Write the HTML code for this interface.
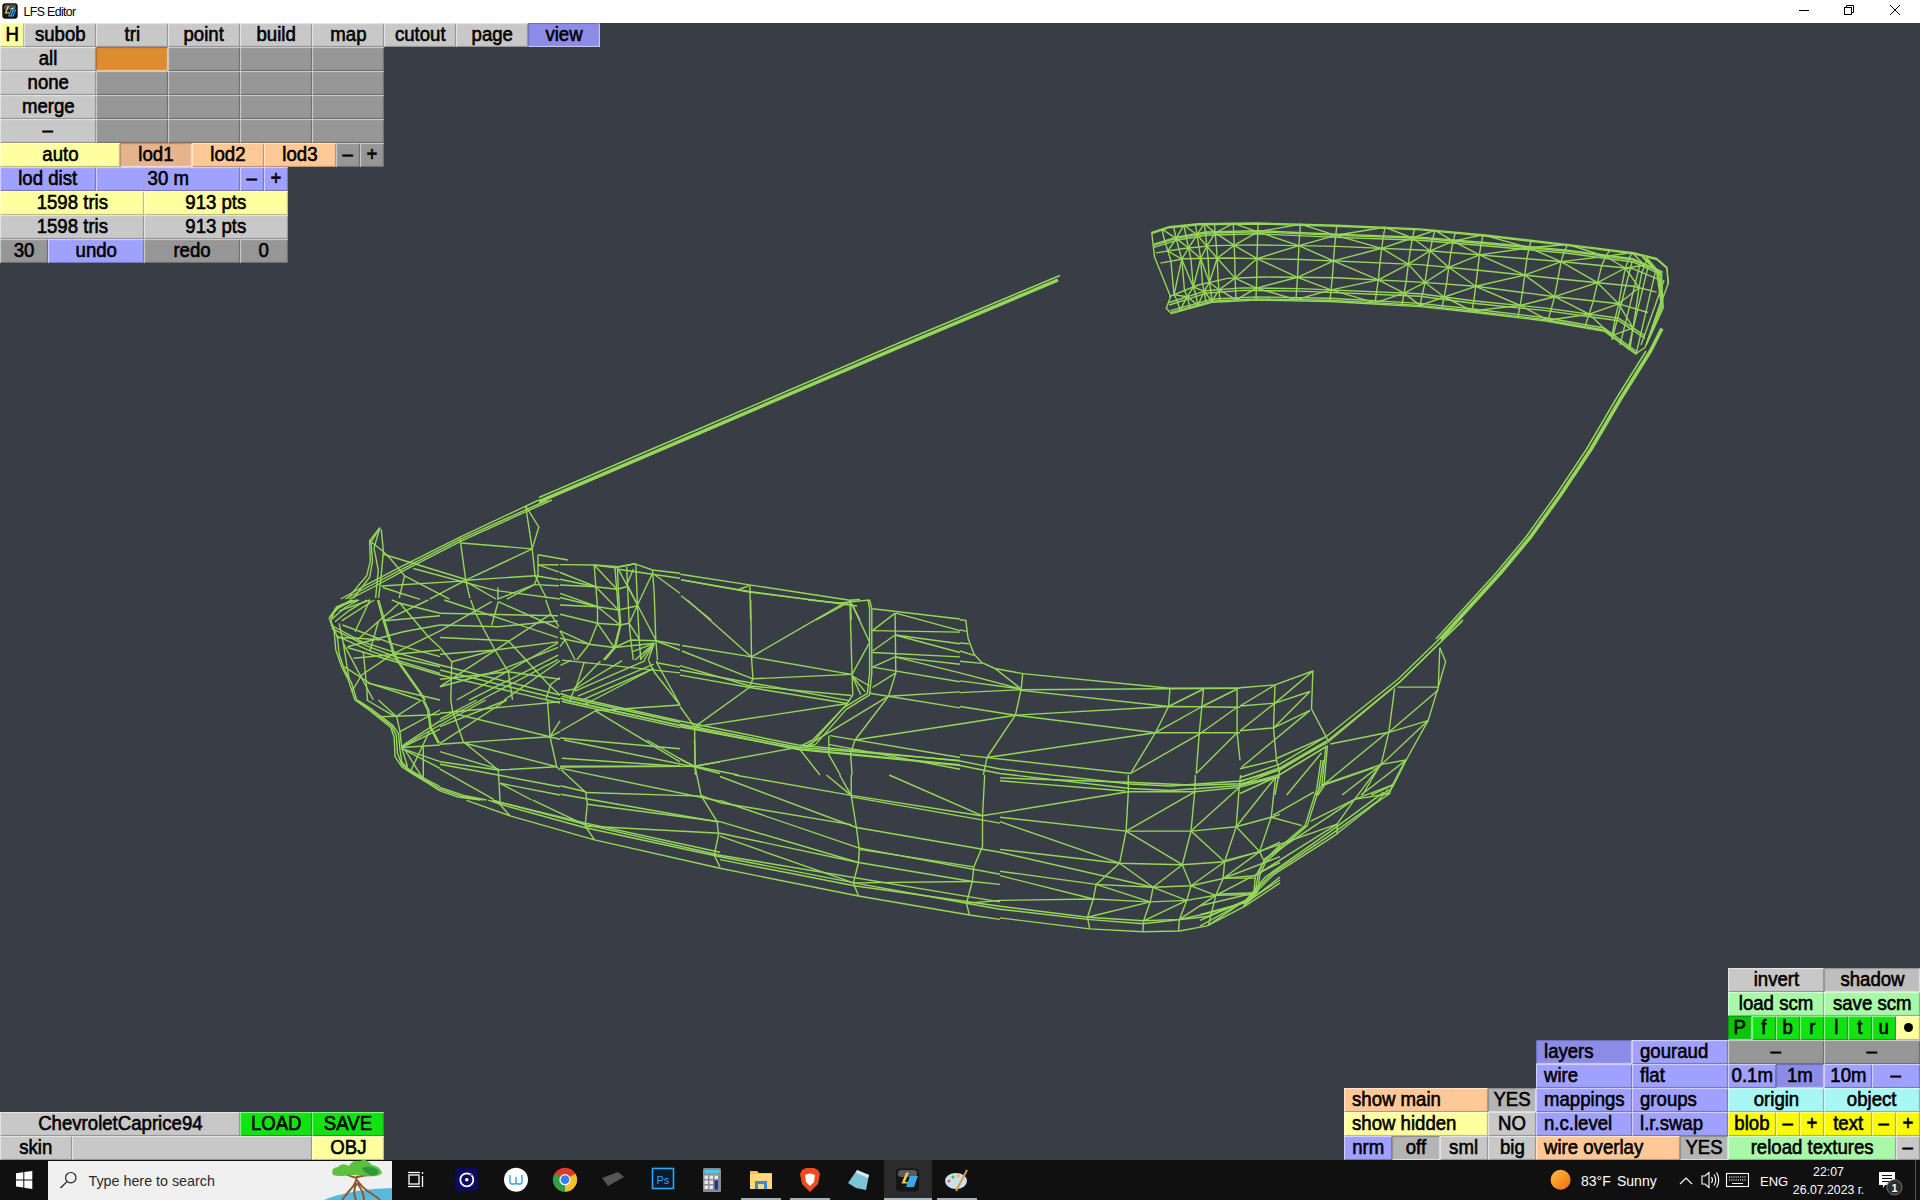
<!DOCTYPE html>
<html><head><meta charset="utf-8"><style>
html,body{margin:0;padding:0;}
body{width:1920px;height:1200px;position:relative;overflow:hidden;background:#393d45;font-family:"Liberation Sans",sans-serif;}
.b{position:absolute;box-sizing:border-box;box-shadow:inset 1px 1px 1px rgba(255,255,255,0.55), inset -1px -1px 1px rgba(0,0,0,0.28);font-size:20px;line-height:22px;text-align:center;color:#000;white-space:nowrap;overflow:hidden;}
.b.p{box-shadow:inset 1px 1px 1px rgba(0,0,0,0.22), inset -1px -1px 1px rgba(255,255,255,0.55);}
.b span{display:inline-block;transform:scaleX(0.93);-webkit-text-stroke:0.6px #000;}
.b.l span{transform-origin:0 50%;}
.dot span{display:inline-block;width:9px;height:9px;border-radius:50%;background:#000;vertical-align:middle;transform:none;-webkit-text-stroke:0;margin-top:-2px;}
#title{position:absolute;left:0;top:0;width:1920px;height:23px;background:#fff;}
#title .t{position:absolute;left:23.5px;top:5px;font-size:12.3px;line-height:14px;color:#000;letter-spacing:-0.6px;}
#tb{position:absolute;left:0;top:1160px;width:1920px;height:40px;background:#101010;}
#tb svg{position:absolute;left:0;top:0;}
svg{position:absolute;left:0;top:0;}
</style></head><body>
<div id="title">
<svg width="20" height="22" style="position:absolute;left:0;top:0" viewBox="0 0 20 22">
<rect x="2.3" y="3.3" width="15.4" height="15.4" rx="3" fill="#141414"/>
<rect x="4" y="4.5" width="12" height="5" rx="2" fill="#6a6a6a" opacity="0.7"/>
<path d="M7.5 6 L9.2 6 L6.6 12.2 L10 12.2 L9.5 13.4 L4.5 13.4 Z" fill="#e8c84a"/>
<path d="M10.5 9.5 L16.3 9.5 L13.6 16.5 L8 16.5 Z" fill="#3aa8e8"/>
<path d="M11.3 10.5 L12.5 10.5 L10.3 15.5 L9.1 15.5 Z M13.8 10.5 L15 10.5 L12.8 15.5 L11.6 15.5 Z" fill="#0a2a50"/>
<path d="M10 8.5 L14 7.5 L13 9 Z" fill="#ffffff"/>
</svg>
<div class="t">LFS Editor</div>
<svg width="120" height="22" style="position:absolute;left:1790px;top:0" viewBox="1790 0 120 22" fill="none" stroke="#000" stroke-width="1">
<line x1="1799" y1="10.5" x2="1809" y2="10.5"/>
<rect x="1844.5" y="7.5" width="7" height="7"/>
<path d="M1846.5 7.5 V5.5 H1853.5 V12.5 H1851.5"/>
<line x1="1890" y1="5" x2="1900" y2="15"/><line x1="1900" y1="5" x2="1890" y2="15"/>
</svg>
</div>
<svg width="1920" height="1200" viewBox="0 0 1920 1200"><g fill="none" stroke="#95d759" stroke-width="1.4" stroke-linejoin="round"><polyline points="960.0,619.7 965.8,620.4 968.0,637.9 973.9,654.0 981.9,662.7 995.0,668.5 1022.7,673.6 1170.0,688.2 1240.0,688.2"/><polyline points="960.0,629.9 966.6,631.4"/><polyline points="960.0,643.0 968.8,643.8"/><polyline points="960.0,651.0 973.9,655.4"/><polyline points="960.0,661.2 981.9,663.4"/><polyline points="995.0,668.5 1021.2,689.0"/><polyline points="960.0,672.9 1021.2,689.0"/><polyline points="960.0,680.9 1021.2,689.0"/><polyline points="1022.7,673.6 1021.2,689.0 1015.4,715.2 987.0,757.5 983.3,775.0"/><polyline points="960.0,692.6 1021.2,689.7 1240.0,688.2"/><polyline points="1021.2,690.4 1168.5,706.5"/><polyline points="960.0,706.5 1015.4,715.2 1155.4,732.7 1240.0,732.7"/><polyline points="960.0,724.0 1015.4,715.2 1168.5,706.5 1240.0,707.2"/><polyline points="987.0,757.5 1155.4,732.7"/><polyline points="960.0,754.6 1130.6,773.5"/><polyline points="1170.0,688.2 1168.5,706.5 1155.4,732.7 1130.6,773.5"/><polyline points="1168.5,706.5 1203.5,689.0"/><polyline points="1203.5,689.0 1199.2,734.2 1196.2,773.5"/><polyline points="1155.4,732.7 1202.1,706.5 1237.1,689.0"/><polyline points="1130.6,773.5 1199.2,734.2 1237.1,707.2"/><polyline points="1237.1,689.0 1237.1,732.7 1240.0,760.4"/><polyline points="1196.2,773.5 1237.1,732.7"/><polyline points="687.3,600.0 751.5,656.9"/><polyline points="750.7,600.0 751.5,656.9 752.9,678.8 749.3,687.5 694.6,726.9 695.3,775.0"/><polyline points="751.5,656.9 841.9,604.4"/><polyline points="682.0,645.5 751.5,656.9 851.4,674.4"/><polyline points="681.9,651.0 752.9,678.8"/><polyline points="752.9,678.8 851.4,674.4"/><polyline points="680.0,665.6 750.0,686.0 851.4,695.5"/><polyline points="680.0,670.0 849.2,700.6"/><polyline points="680.0,675.1 750.0,687.5 847.7,703.5"/><polyline points="680.0,706.5 694.6,726.9"/><polyline points="694.6,726.9 847.7,703.5"/><polyline points="680.0,724.0 798.1,747.3 960.0,760.4"/><polyline points="680.0,726.9 798.1,748.8 960.0,764.8"/><polyline points="694.6,766.2 798.1,747.3"/><polyline points="680.0,759.0 694.6,766.2 738.3,775.0"/><polyline points="798.1,747.3 820.0,775.0"/><polyline points="869.6,600.0 871.8,608.8 871.8,672.9 869.6,694.8 846.2,709.4 815.6,744.4 805.4,747.3"/><polyline points="868.1,600.0 869.6,608.8 869.6,672.9 867.4,693.3 843.3,707.9 811.2,744.4 802.5,747.3"/><polyline points="849.9,601.5 852.1,674.4 852.8,694.8 846.2,705.0 812.7,740.0 799.6,746.6"/><polyline points="852.1,675.8 869.6,686.0"/><polyline points="852.1,675.8 865.2,691.9"/><polyline points="852.1,675.8 860.8,694.8"/><polyline points="852.1,604.4 869.6,642.3 852.1,674.4"/><polyline points="808.3,600.0 840.4,602.9 869.6,600.0"/><polyline points="895.1,613.1 895.8,672.9 888.5,696.2 855.0,740.0 850.6,753.1 852.1,775.0"/><polyline points="872.5,608.8 960.0,619.0"/><polyline points="895.8,613.1 960.0,630.6"/><polyline points="872.5,630.6 895.1,613.1"/><polyline points="872.5,630.6 960.0,632.1"/><polyline points="895.1,635.0 960.0,643.8"/><polyline points="895.1,635.0 960.0,652.5"/><polyline points="872.5,651.0 895.1,635.0"/><polyline points="872.5,652.5 960.0,656.9"/><polyline points="895.1,656.9 960.0,664.2"/><polyline points="895.1,656.9 960.0,672.9"/><polyline points="872.5,667.1 895.1,656.9"/><polyline points="872.5,667.1 960.0,681.7"/><polyline points="872.5,687.5 895.8,672.9"/><polyline points="888.5,696.2 960.0,691.9"/><polyline points="869.6,693.3 960.0,707.9"/><polyline points="855.0,740.0 960.0,724.0"/><polyline points="830.2,735.6 960.0,757.5"/><polyline points="828.8,735.6 828.8,754.6 840.4,775.0"/><polyline points="805.4,746.6 888.5,696.2"/><polyline points="828.8,744.4 960.0,769.2"/><polyline points="561.7,696.1 567.7,697.7 680.0,722.5"/><polyline points="561.7,699.0 567.7,700.6 680.0,725.4"/><polyline points="561.7,701.2 567.7,702.8 680.0,727.6"/><polyline points="560.4,665.3 571.3,660.1"/><polyline points="575.0,689.0 622.1,660.7"/><polyline points="575.0,691.1 645.3,660.7"/><polyline points="577.9,696.2 653.8,664.2"/><polyline points="580.8,700.6 653.8,668.5"/><polyline points="583.8,705.0 647.9,671.5"/><polyline points="600.3,661.2 575.0,687.5 569.2,702.1"/><polyline points="656.7,660.5 656.7,662.7 680.0,705.0"/><polyline points="648.5,660.4 653.8,671.5"/><polyline points="656.7,662.7 680.0,667.1"/><polyline points="561.9,660.1 680.0,672.9"/><polyline points="561.2,691.4 575.0,689.0"/><polyline points="560.2,738.0 680.0,748.8"/><polyline points="560.6,731.0 595.4,710.8 680.0,705.0"/><polyline points="562.0,758.3 680.0,766.2"/><polyline points="560.4,766.2 680.0,766.2"/><polyline points="584.4,661.7 575.0,690.4"/><polyline points="595.4,710.8 680.0,761.9"/><polyline points="653.8,671.5 680.0,705.0"/><polyline points="538.8,500.0 458.5,537.9 401.7,566.4 366.7,584.6 340.8,599.0"/><polyline points="547.5,500.0 460.0,539.4 406.0,567.1 369.6,586.0 345.2,599.0"/><polyline points="551.9,500.0 461.5,540.8 409.0,567.8 372.5,587.5 349.6,599.1"/><polyline points="379.8,527.7 369.6,540.8 370.3,561.2 366.7,575.8 347.6,598.4"/><polyline points="379.8,527.7 371.0,542.3 372.5,561.2 369.6,577.3 353.3,598.4"/><polyline points="381.2,529.2 383.4,551.0 381.2,575.8 378.6,598.0"/><polyline points="379.8,527.7 374.0,548.1 378.3,570.0 375.6,598.0"/><polyline points="369.6,540.8 382.7,551.0 390.0,558.3"/><polyline points="460.0,538.6 465.8,580.2 469.8,598.1"/><polyline points="525.6,505.8 538.8,527.0 532.2,548.9 535.1,575.8 546.5,598.2"/><polyline points="525.6,505.8 532.2,548.9"/><polyline points="461.5,543.0 532.2,548.9"/><polyline points="532.2,548.9 465.8,580.2"/><polyline points="465.8,580.2 535.1,575.8"/><polyline points="538.0,554.7 538.0,575.8 534.4,584.6 496.9,599.3"/><polyline points="538.0,554.7 568.0,560.0"/><polyline points="538.0,564.9 558.7,564.7"/><polyline points="538.0,564.9 559.3,572.2"/><polyline points="535.1,575.8 559.4,579.7"/><polyline points="534.4,584.6 559.0,585.7"/><polyline points="382.7,554.0 465.8,579.5"/><polyline points="381.2,586.0 465.8,580.9"/><polyline points="413.3,568.5 495.0,590.4 559.8,599.0"/><polyline points="390.0,558.3 404.6,575.8 399.2,598.0"/><polyline points="429.7,599.1 465.8,580.2"/><polyline points="465.8,581.7 496.1,599.0"/><polyline points="507.0,599.1 534.4,584.6"/><polyline points="497.9,587.5 497.9,598.0"/><polyline points="404.6,575.8 449.5,599.1"/><polyline points="382.7,587.5 420.1,599.4"/><polyline points="466.5,800.4 510.0,815.8 594.6,839.9 720.0,868.3"/><polyline points="488.2,800.2 499.8,804.2 584.4,827.5 720.0,856.7"/><polyline points="492.5,800.3 585.8,824.6 720.0,855.2"/><polyline points="492.5,800.0 498.3,802.0 585.8,823.1 720.0,852.3"/><polyline points="499.9,800.1 499.8,804.2 510.0,815.8"/><polyline points="561.2,769.8 585.8,792.5 587.3,804.2 585.1,826.0 594.6,839.9"/><polyline points="694.5,740.0 695.2,767.0 701.0,795.4 717.1,821.7 718.5,834.8 714.2,855.2 720.0,866.9"/><polyline points="560.1,767.0 694.5,766.2 720.0,761.9"/><polyline points="494.5,801.0 499.8,804.2"/><polyline points="564.0,740.0 694.5,767.0"/><polyline points="647.1,740.0 694.5,767.0"/><polyline points="560.1,768.1 720.0,801.2"/><polyline points="560.4,785.7 585.8,791.8"/><polyline points="585.8,792.5 701.0,796.1"/><polyline points="560.7,794.2 717.1,821.7"/><polyline points="532.7,800.1 584.4,824.6"/><polyline points="587.3,804.2 720.0,821.7"/><polyline points="695.2,767.0 720.0,773.5"/><polyline points="701.0,795.4 720.0,802.7"/><polyline points="585.1,826.0 720.0,833.3"/><polyline points="720.0,868.3 858.5,896.0 969.4,915.0 1000.0,919.4"/><polyline points="720.0,856.7 854.2,882.9 966.5,903.3 1000.0,909.2"/><polyline points="720.0,859.6 854.2,885.8 1000.0,906.2"/><polyline points="720.0,855.2 1000.0,901.9"/><polyline points="851.2,775.0 851.2,795.4 856.4,827.5 859.3,849.4 858.5,862.5 853.4,882.9 858.5,896.0"/><polyline points="984.7,775.0 982.5,815.8 982.5,846.5 973.8,866.9 972.3,881.5 966.5,903.3 969.4,915.0"/><polyline points="826.5,775.0 851.2,795.4"/><polyline points="839.6,775.0 851.2,795.4"/><polyline points="734.6,775.0 851.2,795.4"/><polyline points="720.0,776.5 856.4,827.5 1000.0,852.3"/><polyline points="720.0,800.5 858.5,847.9 1000.0,874.2"/><polyline points="720.0,802.7 851.2,824.6"/><polyline points="720.0,821.7 858.5,862.5 972.3,881.5"/><polyline points="720.0,833.3 858.5,862.5"/><polyline points="720.0,836.2 853.4,882.9"/><polyline points="851.2,795.4 981.0,815.8"/><polyline points="851.2,796.9 1000.0,823.1"/><polyline points="889.2,775.0 982.5,815.8"/><polyline points="982.5,815.8 1000.0,812.9"/><polyline points="853.4,882.9 972.3,881.5"/><polyline points="972.3,881.5 1000.0,884.4"/><polyline points="966.5,903.3 1000.0,900.4"/><polyline points="859.3,849.4 973.8,866.9"/><polyline points="1128.3,775.0 1128.3,791.8 1126.1,831.1 1119.6,863.2 1096.2,884.4 1093.3,899.0 1087.5,917.2 1089.7,928.9"/><polyline points="1195.4,775.0 1194.7,791.8 1191.0,831.1 1182.3,864.7 1191.0,885.8 1186.7,900.4 1179.4,919.4 1178.6,931.0"/><polyline points="1119.6,863.2 1153.1,887.3 1150.2,901.9 1143.6,920.8 1142.9,931.8"/><polyline points="1240.6,775.0 1239.2,787.4 1236.2,826.8 1224.6,861.8 1223.1,878.5 1215.8,895.3 1208.5,925.2"/><polyline points="1275.6,777.2 1271.2,817.3 1259.6,851.6 1264.0,861.0 1255.2,877.1 1253.8,894.6 1243.5,906.2"/><polyline points="1280.0,845.0 1264.0,861.0"/><polyline points="1000.0,812.9 1128.3,791.8"/><polyline points="1000.0,817.3 1126.1,831.1 1191.0,831.1 1236.2,826.8 1271.2,817.3 1280.0,814.4"/><polyline points="1000.0,821.7 1119.6,863.2"/><polyline points="1000.0,849.4 1119.6,863.2 1182.3,864.7 1224.6,861.8 1259.6,851.6 1280.0,842.1"/><polyline points="1000.0,852.3 1153.1,887.3"/><polyline points="1000.0,871.2 1096.2,884.4 1153.1,887.3 1191.0,885.8 1223.1,878.5 1253.8,875.6 1280.0,862.5"/><polyline points="1000.0,875.6 1093.3,899.0"/><polyline points="1000.0,900.4 1093.3,899.0 1150.2,901.9 1186.7,900.4 1215.8,895.3 1253.8,894.6"/><polyline points="1000.0,906.2 1087.5,917.2 1143.6,920.8 1179.4,919.4 1207.1,913.5 1247.9,901.9 1280.0,877.1"/><polyline points="1000.0,909.2 1087.5,919.4 1142.9,923.8 1207.1,916.5 1250.8,899.0 1280.0,880.0"/><polyline points="1000.0,917.9 1089.7,928.9 1142.9,931.8 1179.4,931.0 1207.1,925.9 1245.0,906.2 1280.0,882.9"/><polyline points="1000.0,777.9 1128.3,782.3 1195.4,785.2 1240.6,783.8 1280.0,777.2"/><polyline points="1000.0,780.8 1125.4,791.0"/><polyline points="1128.3,791.8 1194.7,791.8 1239.2,787.4 1275.6,777.2"/><polyline points="1126.1,831.1 1194.7,791.8"/><polyline points="1191.0,831.1 1239.2,787.4"/><polyline points="1236.2,826.8 1275.6,777.2"/><polyline points="1126.1,831.1 1182.3,864.7"/><polyline points="1191.0,831.1 1224.6,861.8"/><polyline points="1236.2,826.8 1259.6,851.6"/><polyline points="1182.3,864.7 1153.1,887.3"/><polyline points="1224.6,861.8 1191.0,885.8"/><polyline points="1259.6,851.6 1223.1,878.5"/><polyline points="1096.2,884.4 1150.2,901.9"/><polyline points="1153.1,887.3 1186.7,900.4"/><polyline points="1191.0,885.8 1215.8,895.3"/><polyline points="1087.5,917.2 1150.2,901.9"/><polyline points="1143.6,920.8 1186.7,900.4"/><polyline points="1179.4,919.4 1215.8,895.3"/><polyline points="1208.5,925.2 1253.8,894.6"/><polyline points="1215.8,895.3 1253.8,875.6"/><polyline points="1223.1,878.5 1280.0,856.7"/><polyline points="1458.8,620.0 1397.5,679.8 1326.0,736.7 1279.4,764.4 1240.0,777.5"/><polyline points="1463.1,620.0 1400.4,681.2 1329.0,739.6 1280.8,767.3 1240.0,781.9"/><polyline points="1461.7,621.5 1399.0,682.7 1327.5,742.5 1277.9,770.2 1240.0,784.8"/><polyline points="1240.0,687.8 1275.0,684.9 1312.9,671.0 1311.5,709.0 1324.6,733.8 1327.5,739.6"/><polyline points="1275.0,684.9 1273.5,727.9 1276.5,760.0 1279.4,771.7 1275.0,795.0"/><polyline points="1240.0,706.0 1275.0,703.1 1310.0,691.5"/><polyline points="1240.0,730.8 1273.5,727.9 1310.0,710.4"/><polyline points="1240.0,706.0 1275.0,684.9"/><polyline points="1275.0,703.1 1312.9,671.0"/><polyline points="1240.0,730.8 1275.0,703.1"/><polyline points="1273.5,727.9 1310.0,691.5"/><polyline points="1241.5,767.3 1310.0,710.4"/><polyline points="1276.5,758.5 1326.0,736.7"/><polyline points="1240.0,768.8 1276.5,760.0"/><polyline points="1439.8,647.7 1445.6,661.6 1438.3,687.1 1428.1,720.6 1406.2,760.0 1393.1,786.2 1385.8,795.0"/><polyline points="1439.8,647.7 1438.3,687.1"/><polyline points="1397.5,687.1 1438.3,687.1"/><polyline points="1394.6,688.5 1388.8,732.3 1381.5,762.9 1362.5,795.0"/><polyline points="1388.8,732.3 1438.3,690.0"/><polyline points="1330.4,744.0 1388.8,732.3 1428.1,720.6"/><polyline points="1326.0,745.4 1321.7,786.2 1315.8,795.0"/><polyline points="1327.5,745.4 1323.9,786.2 1318.0,795.0"/><polyline points="1321.7,786.2 1387.3,732.3"/><polyline points="1381.5,764.4 1428.1,720.6"/><polyline points="1321.7,784.8 1381.5,764.4 1406.2,760.0"/><polyline points="1361.0,795.0 1406.2,760.0"/><polyline points="1371.2,795.0 1393.1,784.8"/><polyline points="1275.0,777.5 1326.0,746.9"/><polyline points="1240.0,793.5 1275.0,777.5"/><polyline points="1286.7,795.0 1321.7,752.7"/><polyline points="1342.1,795.0 1381.5,764.4"/><polyline points="1392.5,784.8 1389.6,793.5 1375.0,803.8 1334.2,835.8 1272.9,875.2 1249.6,898.5 1200.0,926.2"/><polyline points="1388.1,789.2 1377.9,800.8 1331.2,834.4 1270.0,875.2 1246.7,900.0 1200.0,920.4"/><polyline points="1383.8,792.1 1328.3,832.9 1265.6,876.7 1243.8,902.9 1200.0,914.6"/><polyline points="1321.0,760.0 1316.7,789.2 1305.0,825.6 1264.2,860.6 1258.3,873.8 1255.4,891.2 1243.8,904.4"/><polyline points="1323.2,760.0 1318.9,789.2 1307.2,825.6 1265.6,862.1 1259.8,875.2 1257.6,892.0 1246.7,903.6"/><polyline points="1392.5,784.8 1354.6,799.4 1310.8,821.2"/><polyline points="1405.6,760.0 1392.5,784.8"/><polyline points="1380.8,764.4 1354.6,799.4 1337.1,824.2 1337.1,834.4"/><polyline points="1321.0,786.2 1375.0,767.3"/><polyline points="1270.0,816.9 1302.1,825.6"/><polyline points="1272.9,815.4 1313.8,792.1"/><polyline points="1264.2,859.2 1354.6,799.4"/><polyline points="1258.3,851.9 1337.1,824.2"/><polyline points="1224.8,860.6 1258.3,851.9"/><polyline points="1258.3,873.8 1337.1,824.2"/><polyline points="1223.3,878.1 1255.4,878.1"/><polyline points="1216.0,894.2 1255.4,892.7"/><polyline points="1200.0,905.8 1255.4,892.7"/><polyline points="1389.6,793.5 1354.6,799.4"/><polyline points="680.3,574.3 849.8,600.2 860.0,599.5"/><polyline points="681.6,579.9 749.2,591.5 857.1,606.0"/><polyline points="681.0,579.7 750.6,592.2 849.8,604.6"/><polyline points="737.5,590.0 749.2,585.6"/><polyline points="749.9,585.6 750.6,620.0"/><polyline points="850.5,600.2 851.2,620.0"/><polyline points="681.2,595.8 711.2,620.0"/><polyline points="816.2,620.0 849.8,601.7"/><polyline points="851.2,603.1 860.0,620.0"/><polyline points="1151.7,232.5 1169.2,226.7 1198.3,223.7 1256.7,223.0 1336.9,225.2 1420.0,228.9 1487.5,235.2 1575.0,245.4 1633.3,252.7 1656.7,258.5 1666.9,267.3 1668.3,283.3"/><polyline points="1153.1,245.6 1176.5,238.3 1205.6,233.2 1256.7,231.8 1336.9,235.4 1420.0,238.3 1487.5,244.0 1567.7,251.3 1633.3,260.0 1662.5,273.1"/><polyline points="1156.0,252.9 1183.8,248.5 1212.9,245.6 1256.7,244.9 1336.9,246.4 1420.0,250.0 1560.4,261.5 1633.3,268.8 1661.0,280.4"/><polyline points="1160.4,263.1 1183.8,258.8 1227.5,258.0 1300.4,259.5 1420.0,264.6 1478.8,270.2 1560.4,279.0 1633.3,286.3 1656.7,292.1"/><polyline points="1169.2,296.7 1198.3,285.0 1227.5,278.4 1264.0,277.0 1336.9,277.7 1420.0,282.1 1475.8,286.3 1553.1,296.5 1618.8,303.8 1647.9,312.5"/><polyline points="1169.2,302.5 1205.6,290.8 1242.1,287.9 1300.4,288.6 1420.0,293.8 1472.9,300.8 1545.8,308.1 1618.8,318.3 1645.0,335.8"/><polyline points="1170.6,312.7 1212.9,301.0 1256.7,298.9 1329.6,300.3 1420.0,305.4 1472.9,311.0 1545.8,319.8 1604.2,330.0 1636.3,353.3"/><polyline points="1153.1,247.6 1176.5,240.3 1205.6,235.2 1256.7,233.8 1336.9,237.4 1420.0,240.3 1487.5,246.0 1567.7,253.3 1633.3,262.0 1662.5,275.1"/><polyline points="1169.2,305.0 1205.6,293.3 1242.1,290.4 1300.4,291.1 1420.0,296.3 1472.9,303.3 1545.8,310.6 1618.8,320.8 1645.0,338.3"/><polyline points="1170.6,310.7 1212.9,299.0 1256.7,296.9 1329.6,298.3 1420.0,303.4 1472.9,309.0 1545.8,317.8 1604.2,328.0 1636.3,351.3"/><polyline points="1668.3,283.3 1659.6,306.7 1645.0,347.5 1636.3,353.3"/><polyline points="1664.0,280.0 1655.0,306.0 1641.0,345.0"/><polyline points="1151.7,232.5 1154.6,257.3 1170.6,296.7 1166.3,308.3 1170.6,312.7"/><polyline points="1161.9,229.1 1164.9,241.9 1167.9,251.0 1171.0,261.2 1174.0,294.8 1177.0,300.0 1180.0,310.1"/><polyline points="1173.5,226.3 1176.2,238.4 1179.0,249.3 1181.8,259.2 1184.5,290.5 1187.2,296.7 1190.0,307.3"/><polyline points="1183.8,225.2 1188.5,248.0 1190.9,258.7 1193.3,287.0 1195.6,294.0 1198.0,305.1"/><polyline points="1195.4,224.0 1200.7,258.5 1202.5,284.1 1204.2,291.2 1206.0,302.9"/><polyline points="1204.2,223.6 1205.5,233.2 1208.1,258.4 1209.4,282.5 1210.7,290.4 1212.0,301.2"/><polyline points="1214.4,223.5 1216.3,245.5 1217.2,258.2 1218.1,280.5 1220.0,300.7"/><polyline points="1233.3,223.3 1234.7,258.1 1235.1,278.1 1236.0,299.9"/><polyline points="1258.1,223.0 1257.0,258.6 1256.7,277.3 1256.0,298.9"/><polyline points="1300.4,224.2 1298.9,245.7 1297.5,277.3 1296.0,299.7"/><polyline points="1336.9,225.2 1334.6,246.4 1332.3,277.7 1330.0,300.3"/><polyline points="1385.0,227.3 1383.3,237.0 1381.7,248.3 1380.0,262.9 1378.3,279.9 1375.0,302.9"/><polyline points="1414.6,228.7 1412.5,238.0 1410.4,249.6 1408.3,264.1 1406.2,281.4 1402.0,304.4"/><polyline points="1435.0,230.3 1432.5,239.4 1430.0,250.8 1427.5,265.3 1425.0,282.5 1420.0,305.4"/><polyline points="1455.4,232.2 1453.2,241.1 1450.9,252.6 1448.7,267.3 1446.5,284.1 1444.2,297.0 1442.0,307.7"/><polyline points="1483.1,234.8 1481.2,243.5 1479.4,254.9 1475.7,286.3 1473.8,300.9 1472.0,310.9"/><polyline points="1531.3,240.3 1529.1,247.8 1526.9,258.8 1522.4,292.5 1520.2,305.5 1518.0,316.4"/><polyline points="1567.7,244.5 1564.4,251.0 1561.1,261.6 1554.6,296.7 1551.3,308.9 1548.0,320.2"/><polyline points="1610.0,249.8 1605.8,256.4 1601.7,265.6 1597.5,282.7 1593.3,301.0 1585.0,326.6"/><polyline points="1631.9,252.5 1628.6,259.4 1625.3,268.0 1622.0,285.2 1618.6,303.8 1615.3,317.8 1612.0,335.7"/><polyline points="1647.9,256.3 1644.9,265.2 1641.9,272.4 1639.0,287.7 1636.0,308.9 1633.0,327.8 1630.0,348.7"/><polyline points="1161.9,229.1 1176.2,238.4"/><polyline points="1167.9,251.0 1176.2,238.4"/><polyline points="1167.9,251.0 1181.8,259.2"/><polyline points="1174.0,294.8 1181.8,259.2"/><polyline points="1174.0,294.8 1187.2,296.7"/><polyline points="1180.0,310.1 1187.2,296.7"/><polyline points="1176.2,238.4 1183.8,225.2"/><polyline points="1176.2,238.4 1188.5,248.0"/><polyline points="1181.8,259.2 1188.5,248.0"/><polyline points="1181.8,259.2 1193.3,287.0"/><polyline points="1187.2,296.7 1193.3,287.0"/><polyline points="1187.2,296.7 1198.0,305.1"/><polyline points="1183.8,225.2 1197.2,234.7"/><polyline points="1188.5,248.0 1197.2,234.7"/><polyline points="1188.5,248.0 1200.7,258.5"/><polyline points="1193.3,287.0 1200.7,258.5"/><polyline points="1193.3,287.0 1204.2,291.2"/><polyline points="1198.0,305.1 1204.2,291.2"/><polyline points="1197.2,234.7 1204.2,223.6"/><polyline points="1197.2,234.7 1206.8,246.2"/><polyline points="1200.7,258.5 1206.8,246.2"/><polyline points="1200.7,258.5 1209.4,282.5"/><polyline points="1204.2,291.2 1209.4,282.5"/><polyline points="1204.2,291.2 1212.0,301.2"/><polyline points="1204.2,223.6 1215.3,232.9"/><polyline points="1206.8,246.2 1215.3,232.9"/><polyline points="1206.8,246.2 1217.2,258.2"/><polyline points="1209.4,282.5 1217.2,258.2"/><polyline points="1209.4,282.5 1219.1,289.7"/><polyline points="1212.0,301.2 1219.1,289.7"/><polyline points="1215.3,232.9 1233.3,223.3"/><polyline points="1215.3,232.9 1234.2,245.3"/><polyline points="1217.2,258.2 1234.2,245.3"/><polyline points="1217.2,258.2 1235.1,278.1"/><polyline points="1219.1,289.7 1235.1,278.1"/><polyline points="1219.1,289.7 1236.0,299.9"/><polyline points="1233.3,223.3 1257.8,231.8"/><polyline points="1234.2,245.3 1257.8,231.8"/><polyline points="1234.2,245.3 1257.0,258.6"/><polyline points="1235.1,278.1 1257.0,258.6"/><polyline points="1235.1,278.1 1256.3,288.1"/><polyline points="1236.0,299.9 1256.3,288.1"/><polyline points="1257.8,231.8 1300.4,224.2"/><polyline points="1257.8,231.8 1298.9,245.7"/><polyline points="1257.0,258.6 1298.9,245.7"/><polyline points="1257.0,258.6 1297.5,277.3"/><polyline points="1256.3,288.1 1297.5,277.3"/><polyline points="1256.3,288.1 1296.0,299.7"/><polyline points="1300.4,224.2 1335.8,235.3"/><polyline points="1298.9,245.7 1335.8,235.3"/><polyline points="1298.9,245.7 1333.5,260.9"/><polyline points="1297.5,277.3 1333.5,260.9"/><polyline points="1297.5,277.3 1331.2,289.9"/><polyline points="1296.0,299.7 1331.2,289.9"/><polyline points="1335.8,235.3 1385.0,227.3"/><polyline points="1335.8,235.3 1381.7,248.3"/><polyline points="1333.5,260.9 1381.7,248.3"/><polyline points="1333.5,260.9 1378.3,279.9"/><polyline points="1331.2,289.9 1378.3,279.9"/><polyline points="1331.2,289.9 1375.0,302.9"/><polyline points="1385.0,227.3 1412.5,238.0"/><polyline points="1381.7,248.3 1412.5,238.0"/><polyline points="1381.7,248.3 1408.3,264.1"/><polyline points="1378.3,279.9 1408.3,264.1"/><polyline points="1378.3,279.9 1404.1,293.1"/><polyline points="1375.0,302.9 1404.1,293.1"/><polyline points="1412.5,238.0 1435.0,230.3"/><polyline points="1412.5,238.0 1430.0,250.8"/><polyline points="1408.3,264.1 1430.0,250.8"/><polyline points="1408.3,264.1 1425.0,282.5"/><polyline points="1404.1,293.1 1425.0,282.5"/><polyline points="1404.1,293.1 1420.0,305.4"/><polyline points="1435.0,230.3 1453.2,241.1"/><polyline points="1430.0,250.8 1453.2,241.1"/><polyline points="1430.0,250.8 1448.7,267.3"/><polyline points="1425.0,282.5 1448.7,267.3"/><polyline points="1425.0,282.5 1444.2,297.0"/><polyline points="1420.0,305.4 1444.2,297.0"/><polyline points="1453.2,241.1 1483.1,234.8"/><polyline points="1453.2,241.1 1479.4,254.9"/><polyline points="1448.7,267.3 1479.4,254.9"/><polyline points="1448.7,267.3 1475.7,286.3"/><polyline points="1444.2,297.0 1475.7,286.3"/><polyline points="1444.2,297.0 1472.0,310.9"/><polyline points="1483.1,234.8 1529.1,247.8"/><polyline points="1479.4,254.9 1529.1,247.8"/><polyline points="1479.4,254.9 1524.7,275.1"/><polyline points="1475.7,286.3 1524.7,275.1"/><polyline points="1475.7,286.3 1520.2,305.5"/><polyline points="1472.0,310.9 1520.2,305.5"/><polyline points="1529.1,247.8 1567.7,244.5"/><polyline points="1529.1,247.8 1561.1,261.6"/><polyline points="1524.7,275.1 1561.1,261.6"/><polyline points="1524.7,275.1 1554.6,296.7"/><polyline points="1520.2,305.5 1554.6,296.7"/><polyline points="1520.2,305.5 1548.0,320.2"/><polyline points="1567.7,244.5 1605.8,256.4"/><polyline points="1561.1,261.6 1605.8,256.4"/><polyline points="1561.1,261.6 1597.5,282.7"/><polyline points="1554.6,296.7 1597.5,282.7"/><polyline points="1554.6,296.7 1589.2,314.2"/><polyline points="1548.0,320.2 1589.2,314.2"/><polyline points="1605.8,256.4 1631.9,252.5"/><polyline points="1605.8,256.4 1625.3,268.0"/><polyline points="1597.5,282.7 1625.3,268.0"/><polyline points="1597.5,282.7 1618.6,303.8"/><polyline points="1589.2,314.2 1618.6,303.8"/><polyline points="1589.2,314.2 1612.0,335.7"/><polyline points="1631.9,252.5 1644.9,265.2"/><polyline points="1625.3,268.0 1644.9,265.2"/><polyline points="1625.3,268.0 1639.0,287.7"/><polyline points="1618.6,303.8 1639.0,287.7"/><polyline points="1618.6,303.8 1633.0,327.8"/><polyline points="1612.0,335.7 1633.0,327.8"/><polyline points="560.3,693.5 568.0,696.0 680.0,721.0 798.0,745.0 960.0,761.0 1000.0,769.0 1130.0,784.0 1170.0,786.0 1240.0,781.0 1280.0,770.0 1326.0,742.0"/><polyline points="560.3,698.0 568.0,700.5 680.0,725.5 798.0,749.5 960.0,765.5 1000.0,773.5 1130.0,788.5 1170.0,790.5 1240.0,785.5 1280.0,774.5 1326.0,746.5"/><polyline points="1151.7,233.5 1169.2,227.7 1198.3,224.7 1256.7,224.0 1336.9,226.2 1420.0,229.9 1487.5,236.2 1575.0,246.4 1633.3,253.7 1656.7,259.5 1666.9,268.3 1668.3,284.3"/><polyline points="1153.1,244.4 1176.5,237.1 1205.6,232.0 1256.7,230.6 1336.9,234.2 1420.0,237.1 1487.5,242.8 1567.7,250.1 1633.3,258.8 1662.5,271.9"/><polyline points="1170.6,313.9 1212.9,302.2 1256.7,300.1 1329.6,301.5 1420.0,306.6 1472.9,312.2 1545.8,321.0 1604.2,331.2 1636.3,354.5"/><polyline points="1642.0,256.8 1656.6,271.2 1660.8,302.0 1647.6,341.2"/><polyline points="1644.0,257.6 1658.2,272.4 1661.6,304.0 1647.2,342.4"/><polyline points="1646.0,258.4 1659.8,273.6 1662.4,306.0 1646.8,343.6"/><polyline points="1648.0,259.2 1661.4,274.8 1663.2,308.0 1646.4,344.8"/><polyline points="1632.0,262.0 1612.0,340.0"/><polyline points="1640.0,264.4 1620.0,344.8"/><polyline points="1648.0,266.8 1628.0,349.6"/><polyline points="1656.0,269.2 1636.0,354.4"/><polyline points="357.5,600.0 336.7,606.7 329.2,618.3 334.2,631.7 335.8,650.0 341.7,666.7 348.3,680.0 355.0,700.0"/><polyline points="353.3,600.0 335.0,610.0 330.8,620.8 337.5,637.5 339.2,654.2 344.2,669.2 351.7,683.3 356.7,700.0"/><polyline points="377.5,600.0 383.3,620.8 393.3,654.2 400.0,665.0 420.0,693.3 424.2,700.0"/><polyline points="378.8,600.0 384.6,620.8 394.6,654.2 401.2,665.0 421.2,693.3 425.4,700.0"/><polyline points="330.8,625.0 361.7,641.7 392.5,651.7 440.0,665.0"/><polyline points="331.7,628.3 366.7,645.8 395.0,656.7 440.0,666.7"/><polyline points="336.7,635.8 370.0,650.8 399.2,660.8 440.0,673.3"/><polyline points="342.5,625.0 391.7,643.3 440.0,656.7"/><polyline points="339.2,610.8 370.0,600.0"/><polyline points="341.7,620.8 374.2,600.0"/><polyline points="359.2,638.3 400.0,602.5"/><polyline points="355.0,631.7 370.0,600.0"/><polyline points="391.7,600.0 400.0,603.3 440.0,613.3"/><polyline points="400.0,603.3 428.3,636.7 440.0,647.5"/><polyline points="428.3,600.0 384.2,620.8"/><polyline points="385.0,620.8 440.0,615.8"/><polyline points="440.0,630.8 392.5,654.2 361.7,675.0 351.7,691.7"/><polyline points="347.5,647.5 440.0,675.0"/><polyline points="343.3,643.3 373.3,700.0"/><polyline points="363.3,651.7 366.7,687.5 367.5,700.0"/><polyline points="344.2,666.7 370.0,683.3 420.0,700.0"/><polyline points="368.3,683.3 440.0,700.0"/><polyline points="444.2,600.0 558.1,637.7"/><polyline points="470.8,600.0 475.0,611.7 485.0,631.7 495.0,650.0 508.3,671.7 512.5,700.0"/><polyline points="491.7,601.7 440.0,630.8"/><polyline points="498.3,601.7 550.8,625.0 558.2,628.3"/><polyline points="440.0,613.3 558.0,615.8"/><polyline points="545.8,600.0 550.8,614.2 558.9,626.6"/><polyline points="550.8,614.2 508.3,641.7 440.0,686.7"/><polyline points="440.0,647.5 451.7,661.7 450.8,700.0"/><polyline points="440.0,654.2 495.0,650.0 558.0,641.9"/><polyline points="440.0,665.0 560.0,695.0"/><polyline points="440.0,670.0 560.0,699.2"/><polyline points="440.0,675.0 560.0,703.0"/><polyline points="456.7,700.0 558.2,642.7"/><polyline points="469.2,700.0 558.2,655.1"/><polyline points="480.8,700.0 558.2,659.3"/><polyline points="504.2,700.0 560.0,660.8"/><polyline points="440.0,686.7 498.3,670.8 558.1,647.4"/><polyline points="508.3,671.7 560.0,679.2"/><polyline points="508.3,640.8 548.3,684.2 560.0,695.0"/><polyline points="545.8,700.0 550.8,684.2 560.0,677.5"/><polyline points="498.3,601.7 491.7,625.0"/><polyline points="355.0,700.0 370.0,710.8 390.8,727.5 394.2,737.5 395.0,756.7 401.7,766.7 411.7,773.3 428.3,783.3 440.0,790.8"/><polyline points="357.5,700.0 371.7,709.2 392.5,725.0 398.3,733.3 400.0,750.0 401.7,761.7 407.5,768.3 424.2,778.3 440.0,786.7"/><polyline points="356.2,700.0 370.8,710.0 391.7,726.2 396.2,735.4 397.5,753.3 401.7,764.2 409.6,770.8 426.2,780.8 440.0,788.8"/><polyline points="422.5,700.0 427.5,710.0 430.0,727.5 438.3,743.3"/><polyline points="423.8,700.0 428.8,710.0 431.2,727.5 439.6,743.3"/><polyline points="380.8,716.7 428.3,715.0 440.0,714.2"/><polyline points="378.3,700.0 396.7,716.7 400.0,731.7 401.7,747.5 407.5,766.7"/><polyline points="395.8,716.7 421.7,700.0"/><polyline points="400.0,731.7 440.0,710.0"/><polyline points="401.7,746.7 440.0,725.0"/><polyline points="403.3,745.0 440.0,720.8"/><polyline points="401.7,747.5 440.0,745.0"/><polyline points="401.7,748.3 440.0,761.7"/><polyline points="401.7,748.3 440.0,768.3"/><polyline points="405.0,750.0 423.3,779.2"/><polyline points="423.3,746.7 423.3,779.2"/><polyline points="410.8,770.8 429.2,731.7"/><polyline points="366.7,700.0 395.0,716.7"/><polyline points="401.7,747.5 440.0,729.2"/><polyline points="450.8,700.0 452.5,710.8 463.3,741.7 498.3,770.0 500.0,800.0"/><polyline points="440.0,713.3 498.3,707.5 560.0,701.7"/><polyline points="440.0,725.0 485.8,700.0"/><polyline points="440.0,721.7 481.7,700.0"/><polyline points="440.0,719.2 476.7,700.0"/><polyline points="440.0,726.7 506.7,700.0"/><polyline points="440.0,743.3 506.7,700.0"/><polyline points="440.0,744.2 549.2,736.7 560.0,739.2"/><polyline points="465.0,743.3 556.7,766.7"/><polyline points="440.0,751.7 498.3,769.2"/><polyline points="440.0,761.7 498.3,770.0 556.7,766.7"/><polyline points="440.0,764.2 560.0,786.7"/><polyline points="440.0,769.2 493.3,799.2"/><polyline points="440.0,790.8 456.7,796.7 480.0,800.0"/><polyline points="440.0,787.5 465.0,795.8 486.7,800.0"/><polyline points="440.0,789.2 460.8,796.2 483.3,800.0"/><polyline points="500.0,783.3 560.0,795.0"/><polyline points="500.0,783.3 531.7,800.0"/><polyline points="547.5,700.0 550.0,736.7 556.7,766.7 560.0,770.0"/><polyline points="550.0,736.7 560.0,720.8"/><polyline points="550.0,736.7 560.0,731.7"/><polyline points="456.7,714.2 550.0,736.7"/><polyline points="329.2,618.3 340.8,605.0 357.5,600.0"/><polyline points="331.7,619.2 345.0,607.5 359.2,600.0"/><polyline points="330.0,616.7 338.3,606.7 351.7,600.0"/><polyline points="335.0,621.7 347.5,611.7 366.7,600.0"/><polyline points="339.2,623.3 343.3,643.3"/><polyline points="343.3,643.3 349.2,680.0"/><polyline points="336.7,637.5 359.2,638.3 380.0,640.0"/><polyline points="370.0,650.8 378.3,621.7"/><polyline points="347.5,646.7 403.3,631.7 440.0,625.0"/><polyline points="353.3,658.3 440.0,650.0"/><polyline points="440.0,625.0 498.3,626.7 557.9,621.0"/><polyline points="440.0,637.5 508.3,640.8"/><polyline points="451.7,661.7 495.0,650.0"/><polyline points="440.0,679.2 508.3,671.7"/><polyline points="560.0,564.6 594.2,565.0 615.0,567.9 635.0,563.8 652.5,570.0 680.0,573.3"/><polyline points="594.2,565.0 618.3,566.7 635.0,563.8"/><polyline points="618.3,569.2 652.5,574.2 680.0,578.3"/><polyline points="594.2,565.0 595.8,586.7 597.5,606.7 597.5,623.3 589.2,644.2 576.7,660.0"/><polyline points="615.0,567.9 616.7,590.0 618.3,610.0 620.0,625.0 614.2,647.5 603.3,660.0"/><polyline points="617.5,567.9 618.3,590.0 619.6,610.0 620.8,625.0 615.4,647.5 605.0,660.0"/><polyline points="626.7,566.7 627.5,585.0 629.2,623.3 630.8,640.0 633.3,660.0"/><polyline points="635.8,563.8 637.5,605.0 639.2,639.2 640.8,660.0"/><polyline points="652.5,570.0 654.2,593.3 655.8,640.0 657.5,660.0"/><polyline points="594.2,565.0 617.5,590.0"/><polyline points="595.8,586.7 618.3,610.0"/><polyline points="597.5,606.7 620.0,625.0"/><polyline points="597.5,623.3 614.2,647.5"/><polyline points="618.3,569.2 637.5,605.0 655.8,640.0"/><polyline points="626.7,585.0 633.3,569.2"/><polyline points="627.5,585.0 637.5,605.0"/><polyline points="637.5,605.0 629.2,623.3"/><polyline points="629.2,623.3 639.2,639.2"/><polyline points="637.5,605.0 652.5,573.3"/><polyline points="655.0,575.0 680.0,593.3"/><polyline points="560.0,572.5 595.8,586.7 616.7,589.2 626.7,586.7"/><polyline points="560.0,579.2 595.8,586.7"/><polyline points="560.0,585.0 595.8,586.7"/><polyline points="560.0,593.3 597.5,606.7 618.3,610.0 637.5,605.8"/><polyline points="560.0,597.5 597.5,606.7"/><polyline points="560.0,605.0 597.5,606.7"/><polyline points="560.0,614.2 597.5,623.3 620.0,625.0 629.2,623.3"/><polyline points="560.0,630.8 589.2,644.2 614.2,647.5 630.8,640.0 655.8,640.8 680.0,645.0"/><polyline points="560.0,638.3 589.2,644.2"/><polyline points="655.8,640.8 680.0,650.0"/><polyline points="654.2,643.3 632.5,651.7"/><polyline points="654.2,643.3 635.0,660.0"/><polyline points="654.2,643.3 640.0,660.0"/><polyline points="654.2,643.3 644.2,660.0"/><polyline points="654.2,643.3 648.3,660.0"/><polyline points="560.0,630.8 565.0,640.0 575.0,660.0"/><polyline points="565.0,640.0 560.0,646.7"/><polyline points="614.2,647.5 654.2,643.3"/><polyline stroke-width="1.5" points="539.0,497.5 700.0,428.5 900.0,342.5 1060.0,275.5"/><polyline stroke-width="3.4" points="539.0,501.6 700.0,432.6 900.0,346.6 1058.0,280.0"/><polyline stroke-width="1.5" points="1646.0,351.0 1616.0,399.0 1586.0,450.0 1556.0,495.0 1526.0,537.0 1496.0,573.0 1466.0,606.0 1436.0,639.0"/><polyline stroke-width="3.6" points="1661.9,328.5 1650.5,351.0 1620.5,399.0 1590.5,450.0 1560.5,495.0 1530.5,537.0 1500.5,573.0 1470.5,606.0 1440.5,639.0"/></g></svg>
<div class="b " style="left:0px;top:23px;width:24px;height:24px;background:#ffffa0;"><span>H</span></div><div class="b " style="left:24px;top:23px;width:72px;height:24px;background:#c8c8c8;"><span>subob</span></div><div class="b " style="left:96px;top:23px;width:72px;height:24px;background:#c8c8c8;"><span>tri</span></div><div class="b " style="left:168px;top:23px;width:72px;height:24px;background:#c8c8c8;"><span>point</span></div><div class="b " style="left:240px;top:23px;width:72px;height:24px;background:#c8c8c8;"><span>build</span></div><div class="b " style="left:312px;top:23px;width:72px;height:24px;background:#c8c8c8;"><span>map</span></div><div class="b " style="left:384px;top:23px;width:72px;height:24px;background:#c8c8c8;"><span>cutout</span></div><div class="b " style="left:456px;top:23px;width:72px;height:24px;background:#c8c8c8;"><span>page</span></div><div class="b p" style="left:528px;top:23px;width:72px;height:24px;background:#8c8ce6;"><span>view</span></div><div class="b " style="left:0px;top:47px;width:96px;height:24px;background:#c8c8c8;"><span>all</span></div><div class="b p" style="left:96px;top:47px;width:72px;height:24px;background:#de8c30;"><span></span></div><div class="b " style="left:168px;top:47px;width:72px;height:24px;background:#969696;"><span></span></div><div class="b " style="left:240px;top:47px;width:72px;height:24px;background:#969696;"><span></span></div><div class="b " style="left:312px;top:47px;width:72px;height:24px;background:#969696;"><span></span></div><div class="b " style="left:0px;top:71px;width:96px;height:24px;background:#c8c8c8;"><span>none</span></div><div class="b " style="left:96px;top:71px;width:72px;height:24px;background:#969696;"><span></span></div><div class="b " style="left:168px;top:71px;width:72px;height:24px;background:#969696;"><span></span></div><div class="b " style="left:240px;top:71px;width:72px;height:24px;background:#969696;"><span></span></div><div class="b " style="left:312px;top:71px;width:72px;height:24px;background:#969696;"><span></span></div><div class="b " style="left:0px;top:95px;width:96px;height:24px;background:#c8c8c8;"><span>merge</span></div><div class="b " style="left:96px;top:95px;width:72px;height:24px;background:#969696;"><span></span></div><div class="b " style="left:168px;top:95px;width:72px;height:24px;background:#969696;"><span></span></div><div class="b " style="left:240px;top:95px;width:72px;height:24px;background:#969696;"><span></span></div><div class="b " style="left:312px;top:95px;width:72px;height:24px;background:#969696;"><span></span></div><div class="b " style="left:0px;top:119px;width:96px;height:24px;background:#c8c8c8;"><span>–</span></div><div class="b " style="left:96px;top:119px;width:72px;height:24px;background:#969696;"><span></span></div><div class="b " style="left:168px;top:119px;width:72px;height:24px;background:#969696;"><span></span></div><div class="b " style="left:240px;top:119px;width:72px;height:24px;background:#969696;"><span></span></div><div class="b " style="left:312px;top:119px;width:72px;height:24px;background:#969696;"><span></span></div><div class="b " style="left:0px;top:143px;width:120px;height:24px;background:#ffffa0;"><span>auto</span></div><div class="b p" style="left:120px;top:143px;width:72px;height:24px;background:#e6b48c;"><span>lod1</span></div><div class="b " style="left:192px;top:143px;width:72px;height:24px;background:#ffc896;"><span>lod2</span></div><div class="b " style="left:264px;top:143px;width:72px;height:24px;background:#ffc896;"><span>lod3</span></div><div class="b " style="left:336px;top:143px;width:24px;height:24px;background:#969696;"><span>–</span></div><div class="b " style="left:360px;top:143px;width:24px;height:24px;background:#969696;"><span>+</span></div><div class="b " style="left:0px;top:167px;width:96px;height:24px;background:#a0a0ff;"><span>lod dist</span></div><div class="b " style="left:96px;top:167px;width:144px;height:24px;background:#a0a0ff;"><span>30 m</span></div><div class="b " style="left:240px;top:167px;width:24px;height:24px;background:#a0a0ff;"><span>–</span></div><div class="b " style="left:264px;top:167px;width:24px;height:24px;background:#a0a0ff;"><span>+</span></div><div class="b " style="left:0px;top:191px;width:144px;height:24px;background:#ffffa0;"><span>1598 tris</span></div><div class="b " style="left:144px;top:191px;width:144px;height:24px;background:#ffffa0;"><span>913 pts</span></div><div class="b " style="left:0px;top:215px;width:144px;height:24px;background:#c8c8c8;"><span>1598 tris</span></div><div class="b " style="left:144px;top:215px;width:144px;height:24px;background:#c8c8c8;"><span>913 pts</span></div><div class="b " style="left:0px;top:239px;width:48px;height:24px;background:#969696;"><span>30</span></div><div class="b " style="left:48px;top:239px;width:96px;height:24px;background:#a0a0ff;"><span>undo</span></div><div class="b " style="left:144px;top:239px;width:96px;height:24px;background:#969696;"><span>redo</span></div><div class="b " style="left:240px;top:239px;width:48px;height:24px;background:#969696;"><span>0</span></div><div class="b " style="left:1728px;top:968px;width:96px;height:24px;background:#c8c8c8;"><span>invert</span></div><div class="b p" style="left:1824px;top:968px;width:96px;height:24px;background:#bebebe;"><span>shadow</span></div><div class="b " style="left:1728px;top:992px;width:96px;height:24px;background:#a8f8a8;"><span>load scm</span></div><div class="b " style="left:1824px;top:992px;width:96px;height:24px;background:#a8f8a8;"><span>save scm</span></div><div class="b p" style="left:1728px;top:1016px;width:24px;height:24px;background:#0cc40c;"><span>P</span></div><div class="b " style="left:1752px;top:1016px;width:24px;height:24px;background:#12e212;"><span>f</span></div><div class="b " style="left:1776px;top:1016px;width:24px;height:24px;background:#12e212;"><span>b</span></div><div class="b " style="left:1800px;top:1016px;width:24px;height:24px;background:#12e212;"><span>r</span></div><div class="b " style="left:1824px;top:1016px;width:24px;height:24px;background:#12e212;"><span>l</span></div><div class="b " style="left:1848px;top:1016px;width:24px;height:24px;background:#12e212;"><span>t</span></div><div class="b " style="left:1872px;top:1016px;width:24px;height:24px;background:#12e212;"><span>u</span></div><div class="b dot" style="left:1896px;top:1016px;width:24px;height:24px;background:#ffffa0;"><span></span></div><div class="b p l" style="left:1536px;top:1040px;width:96px;height:24px;background:#8c8ce6;text-align:left;padding-left:8px;"><span>layers</span></div><div class="b  l" style="left:1632px;top:1040px;width:96px;height:24px;background:#a0a0ff;text-align:left;padding-left:8px;"><span>gouraud</span></div><div class="b " style="left:1728px;top:1040px;width:96px;height:24px;background:#969696;"><span>–</span></div><div class="b " style="left:1824px;top:1040px;width:96px;height:24px;background:#969696;"><span>–</span></div><div class="b  l" style="left:1536px;top:1064px;width:96px;height:24px;background:#a0a0ff;text-align:left;padding-left:8px;"><span>wire</span></div><div class="b  l" style="left:1632px;top:1064px;width:96px;height:24px;background:#a0a0ff;text-align:left;padding-left:8px;"><span>flat</span></div><div class="b " style="left:1728px;top:1064px;width:48px;height:24px;background:#a0a0ff;"><span>0.1m</span></div><div class="b p" style="left:1776px;top:1064px;width:48px;height:24px;background:#8c8ce6;"><span>1m</span></div><div class="b " style="left:1824px;top:1064px;width:48px;height:24px;background:#a0a0ff;"><span>10m</span></div><div class="b " style="left:1872px;top:1064px;width:48px;height:24px;background:#a0a0ff;"><span>–</span></div><div class="b  l" style="left:1344px;top:1088px;width:144px;height:24px;background:#ffc896;text-align:left;padding-left:8px;"><span>show main</span></div><div class="b p" style="left:1488px;top:1088px;width:48px;height:24px;background:#b4b4b4;"><span>YES</span></div><div class="b  l" style="left:1536px;top:1088px;width:96px;height:24px;background:#a0a0ff;text-align:left;padding-left:8px;"><span>mappings</span></div><div class="b  l" style="left:1632px;top:1088px;width:96px;height:24px;background:#a0a0ff;text-align:left;padding-left:8px;"><span>groups</span></div><div class="b " style="left:1728px;top:1088px;width:96px;height:24px;background:#a8f6f6;"><span>origin</span></div><div class="b " style="left:1824px;top:1088px;width:96px;height:24px;background:#a8f6f6;"><span>object</span></div><div class="b  l" style="left:1344px;top:1112px;width:144px;height:24px;background:#ffffa0;text-align:left;padding-left:8px;"><span>show hidden</span></div><div class="b " style="left:1488px;top:1112px;width:48px;height:24px;background:#c8c8c8;"><span>NO</span></div><div class="b  l" style="left:1536px;top:1112px;width:96px;height:24px;background:#a0a0ff;text-align:left;padding-left:8px;"><span>n.c.level</span></div><div class="b  l" style="left:1632px;top:1112px;width:96px;height:24px;background:#a0a0ff;text-align:left;padding-left:8px;"><span>l.r.swap</span></div><div class="b " style="left:1728px;top:1112px;width:48px;height:24px;background:#fafa08;"><span>blob</span></div><div class="b " style="left:1776px;top:1112px;width:24px;height:24px;background:#fafa08;"><span>–</span></div><div class="b " style="left:1800px;top:1112px;width:24px;height:24px;background:#fafa08;"><span>+</span></div><div class="b " style="left:1824px;top:1112px;width:48px;height:24px;background:#fafa08;"><span>text</span></div><div class="b " style="left:1872px;top:1112px;width:24px;height:24px;background:#fafa08;"><span>–</span></div><div class="b " style="left:1896px;top:1112px;width:24px;height:24px;background:#fafa08;"><span>+</span></div><div class="b " style="left:1344px;top:1136px;width:48px;height:24px;background:#a0a0ff;"><span>nrm</span></div><div class="b p" style="left:1392px;top:1136px;width:48px;height:24px;background:#b4b4b4;"><span>off</span></div><div class="b " style="left:1440px;top:1136px;width:48px;height:24px;background:#c8c8c8;"><span>sml</span></div><div class="b " style="left:1488px;top:1136px;width:48px;height:24px;background:#c8c8c8;"><span>big</span></div><div class="b  l" style="left:1536px;top:1136px;width:144px;height:24px;background:#ffc896;text-align:left;padding-left:8px;"><span>wire overlay</span></div><div class="b p" style="left:1680px;top:1136px;width:48px;height:24px;background:#b4b4b4;"><span>YES</span></div><div class="b " style="left:1728px;top:1136px;width:168px;height:24px;background:#a8f8a8;"><span>reload textures</span></div><div class="b " style="left:1896px;top:1136px;width:24px;height:24px;background:#c8c8c8;"><span>–</span></div><div class="b " style="left:0px;top:1112px;width:240px;height:24px;background:#c8c8c8;"><span>ChevroletCaprice94</span></div><div class="b " style="left:240px;top:1112px;width:72px;height:24px;background:#12e212;"><span>LOAD</span></div><div class="b " style="left:312px;top:1112px;width:72px;height:24px;background:#12e212;"><span>SAVE</span></div><div class="b " style="left:0px;top:1136px;width:72px;height:24px;background:#c8c8c8;"><span>skin</span></div><div class="b " style="left:72px;top:1136px;width:240px;height:24px;background:#c8c8c8;"><span></span></div><div class="b " style="left:312px;top:1136px;width:72px;height:24px;background:#ffffa0;"><span>OBJ</span></div>
<div id="tb">
<svg width="1920" height="40" viewBox="0 1160 1920 40" style="position:absolute;left:0;top:0">
<!-- start -->
<path d="M16 1173.2 L23.3 1172.2 V1179.4 H16 Z M24.3 1172 L32.3 1170.9 V1179.4 H24.3 Z M16 1180.4 H23.3 V1187.6 L16 1186.6 Z M24.3 1180.4 H32.3 V1188.9 L24.3 1187.8 Z" fill="#fff"/>
<!-- search box -->
<rect x="48" y="1161" width="344" height="39" fill="#f0f0f0"/>
<circle cx="70.8" cy="1177.7" r="5.2" fill="none" stroke="#222" stroke-width="1.2"/>
<line x1="67" y1="1181.6" x2="60.5" y2="1188" stroke="#222" stroke-width="1.3"/>
<text x="88.5" y="1185.6" font-family="Liberation Sans" font-size="14.3" fill="#2a2a2a">Type here to search</text>
<!-- tree image -->
<clipPath id="sb"><rect x="48" y="1161" width="344" height="39"/></clipPath>
<g clip-path="url(#sb)"><ellipse cx="400" cy="1214" rx="90" ry="26" fill="#5ab8dc"/></g>
<path d="M357 1176 Q356 1184 350 1190 Q345 1196 342 1200 M357 1180 Q362 1188 372 1194 Q378 1198 380 1200 M357 1183 Q352 1190 356 1200 M357 1183 Q364 1192 364 1200 M357 1178 Q348 1176 342 1172 M357 1177 Q365 1175 372 1175" stroke="#8a5a2a" stroke-width="2" fill="none"/>
<path d="M333 1175 Q330 1168 338 1167 Q342 1162 349 1166 Q352 1160 360 1161 Q366 1158 372 1165 Q380 1166 382 1173 Q378 1177 370 1176 Q360 1175 350 1175 Q340 1177 333 1175 Z" fill="#5cc040"/>
<path d="M362 1168 Q370 1164 378 1170 Q380 1175 372 1176 Q365 1174 362 1168 Z" fill="#2a9a3a"/>
<!-- task view -->
<g fill="none" stroke="#fff" stroke-width="1.3">
<rect x="409" y="1175" width="10" height="9"/>
<line x1="408" y1="1172.5" x2="420" y2="1172.5"/><line x1="408" y1="1186.5" x2="420" y2="1186.5"/>
<line x1="422.5" y1="1172" x2="422.5" y2="1174"/><line x1="422.5" y1="1176" x2="422.5" y2="1187"/>
</g>
<!-- app1 dark blue -->
<rect x="455" y="1168" width="23" height="23" rx="4" fill="#0d0b5e"/>
<circle cx="466.8" cy="1179.8" r="6.5" fill="none" stroke="#fff" stroke-width="1.8"/>
<circle cx="466.8" cy="1179.8" r="1.8" fill="#fff"/>
<circle cx="471" cy="1174.8" r="1.4" fill="#e84aa8"/>
<!-- w circle -->
<circle cx="516" cy="1179.7" r="12" fill="#fff"/>
<path d="M510 1175 V1182 Q510 1184 512 1184 H514 Q516 1184 516 1182 V1177 M516 1182 Q516 1184 518 1184 H520 Q522 1184 522 1182 V1175" fill="none" stroke="#3aa0d8" stroke-width="1.4"/>
<!-- chrome -->
<circle cx="565" cy="1179.7" r="12" fill="#dd3a2e"/>
<path d="M565 1179.7 L575.4 1173.7 A12 12 0 0 1 565 1191.7 Z" fill="#f6c12a"/>
<path d="M565 1179.7 L565 1191.7 A12 12 0 0 1 554.6 1173.7 Z" fill="#2e9e48"/>
<circle cx="565" cy="1179.7" r="5.6" fill="#fff"/>
<circle cx="565" cy="1179.7" r="4.4" fill="#3a7ee8"/>
<!-- tablet -->
<path d="M602 1178 L618 1172 L624 1177 L608 1186 Z" fill="#555"/>
<!-- Ps -->
<rect x="652.5" y="1168.5" width="21" height="20" fill="#0a1a2a" stroke="#2fa6f0" stroke-width="1.6"/>
<text x="656.5" y="1183.5" font-family="Liberation Sans" font-size="11" fill="#2fa6f0">Ps</text>
<!-- calc -->
<rect x="703" y="1168" width="18" height="24" rx="1.5" fill="#8a8c90"/>
<rect x="704.5" y="1170" width="15" height="3.5" fill="#4ac8f0"/>
<g fill="#e8e8ea">
<rect x="704.5" y="1175.5" width="3.5" height="3.5"/><rect x="709.5" y="1175.5" width="3.5" height="3.5"/><rect x="714.5" y="1175.5" width="3.5" height="3.5"/>
<rect x="704.5" y="1180.5" width="3.5" height="3.5"/><rect x="709.5" y="1180.5" width="3.5" height="3.5"/>
<rect x="704.5" y="1185.5" width="3.5" height="3.5"/><rect x="709.5" y="1185.5" width="3.5" height="3.5"/>
</g>
<rect x="714.5" y="1180.5" width="3.5" height="9" fill="#1a3a8a"/>
<!-- folder -->
<path d="M750 1171 H757 L759 1173 H772 V1189 H750 Z" fill="#f4c24a"/>
<rect x="750" y="1174" width="22" height="15" fill="#fcd878"/>
<path d="M755 1189 V1181 H767 V1189 H764 V1184 H758 V1189 Z" fill="#3a8ad8"/>
<!-- brave -->
<path d="M802 1170 L806 1168 H814 L818 1170 L820 1174 L818 1184 L810 1192 L802 1184 L800 1174 Z" fill="#f04a1c"/>
<path d="M805 1175 Q810 1172 815 1175 L814 1182 L810 1186 L806 1182 Z" fill="#fff"/>
<!-- notepad -->
<path d="M848 1183 L857 1170 L869 1175 L866 1190 L856 1188 Z" fill="#7cc4d8"/>
<path d="M857 1170 L869 1175 L868 1178 L856 1173 Z" fill="#d8e8ec"/>
<!-- LFS active -->
<rect x="884" y="1160" width="48" height="38" fill="#2c2c2c"/>
<rect x="896" y="1168.5" width="23" height="23" rx="4" fill="#141414"/>
<rect x="898" y="1170" width="19" height="7" rx="3" fill="#5a5a5a"/>
<path d="M906 1172.5 L909 1172.5 L905 1182 L910 1182 L909.3 1183.5 L901.5 1183.5 Z" fill="#e8c84a"/>
<path d="M910 1176 L918 1176 L914 1187 L906 1187 Z" fill="#3aa8e8"/>
<!-- paint -->
<ellipse cx="956" cy="1181" rx="11" ry="8" fill="#c8e0f0"/>
<circle cx="949" cy="1181" r="1.6" fill="#d86a5a"/><circle cx="953" cy="1177" r="1.6" fill="#4ab84a"/><circle cx="958" cy="1176" r="1.6" fill="#f0b040"/>
<line x1="956" y1="1191" x2="967" y2="1170" stroke="#e09a40" stroke-width="2"/>
<!-- running bars -->
<rect x="741" y="1198" width="40" height="2" fill="#a4b0bc"/>
<rect x="790" y="1198" width="40" height="2" fill="#a4b0bc"/>
<rect x="884" y="1198" width="48" height="2" fill="#a8bccc"/>
<rect x="937" y="1198" width="40" height="2" fill="#a4b0bc"/>
<!-- tray -->
<defs><linearGradient id="sun" x1="0" y1="0" x2="1" y2="1"><stop offset="0" stop-color="#ffc040"/><stop offset="1" stop-color="#f06a10"/></linearGradient></defs>
<circle cx="1560.6" cy="1179.8" r="10" fill="url(#sun)"/>
<text x="1581" y="1186" font-family="Liberation Sans" font-size="14" fill="#fff">83°F</text>
<text x="1617" y="1186" font-family="Liberation Sans" font-size="14" fill="#fff">Sunny</text>
<path d="M1680 1184 L1686 1178 L1692 1184" fill="none" stroke="#fff" stroke-width="1.2"/>
<path d="M1702 1176 H1705 L1709 1172.5 V1187.5 L1705 1184 H1702 Z" fill="none" stroke="#fff" stroke-width="1.1"/>
<path d="M1711.5 1177 Q1713.5 1180 1711.5 1183 M1714 1174.5 Q1717.5 1180 1714 1185.5 M1716.5 1172.5 Q1721 1180 1716.5 1187.5" fill="none" stroke="#fff" stroke-width="1.1"/>
<rect x="1726.5" y="1173.5" width="22" height="13" fill="none" stroke="#fff" stroke-width="1.1"/>
<g stroke="#fff" stroke-width="1"><line x1="1729" y1="1177" x2="1746" y2="1177" stroke-dasharray="1.2,1"/><line x1="1729" y1="1180" x2="1746" y2="1180" stroke-dasharray="1.2,1"/><line x1="1732" y1="1183.5" x2="1743" y2="1183.5"/></g>
<text x="1760" y="1185.5" font-family="Liberation Sans" font-size="13" fill="#fff">ENG</text>
<text x="1828.5" y="1175.5" font-family="Liberation Sans" font-size="12.3" fill="#fff" text-anchor="middle">22:07</text>
<text x="1828.5" y="1193.5" font-family="Liberation Sans" font-size="12.3" fill="#fff" text-anchor="middle">26.07.2023 г.</text>
<path d="M1879 1172 H1895 V1185 H1885 L1883 1188 V1185 H1879 Z" fill="#fff"/>
<g stroke="#111" stroke-width="1"><line x1="1882" y1="1175.5" x2="1892" y2="1175.5"/><line x1="1882" y1="1178.5" x2="1892" y2="1178.5"/><line x1="1882" y1="1181.5" x2="1890" y2="1181.5"/></g>
<circle cx="1894.5" cy="1187.3" r="7.6" fill="#2e2e2e" stroke="#777" stroke-width="1"/>
<text x="1894.5" y="1191.5" font-family="Liberation Sans" font-size="11" font-weight="bold" fill="#fff" text-anchor="middle">1</text>
<line x1="1915.5" y1="1160" x2="1915.5" y2="1200" stroke="#555" stroke-width="1"/>
</svg>
</div>
</body></html>
